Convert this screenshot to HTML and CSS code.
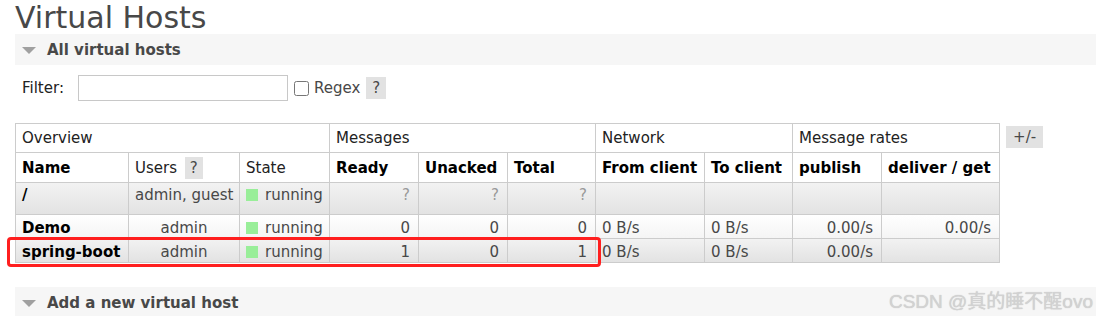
FILE: index.html
```html
<!DOCTYPE html>
<html lang="en">
<head>
  <meta charset="UTF-8">
  <title>Virtual Hosts</title>
  <link rel="stylesheet" href="styles.css">
</head>
<body>
  <div class="page">
    <h1>Virtual Hosts</h1>
    <div class="section-head"><span class="arrow"></span>All virtual hosts</div>

    <div class="filter">
      <label for="filter">Filter:</label>
      <input type="text" id="filter">
      <input type="checkbox" id="regex"> <label for="regex" class="regex">Regex</label>
      <span class="help">?</span>
    </div>

    <div class="list-wrap">
      <table class="list">
        <colgroup>
          <col style="width:113px"><col style="width:111px"><col style="width:90px">
          <col style="width:89px"><col style="width:89px"><col style="width:88px">
          <col style="width:109px"><col style="width:88px">
          <col style="width:89px"><col style="width:118px">
        </colgroup>
        <thead>
          <tr class="group">
            <th colspan="3">Overview</th>
            <th colspan="3">Messages</th>
            <th colspan="2">Network</th>
            <th colspan="2">Message rates</th>
          </tr>
          <tr class="cols">
            <th>Name</th>
            <th class="plain">Users <span class="help">?</span></th>
            <th class="plain">State</th>
            <th>Ready</th>
            <th>Unacked</th>
            <th>Total</th>
            <th>From client</th>
            <th>To client</th>
            <th>publish</th>
            <th>deliver / get</th>
          </tr>
        </thead>
        <tbody>
          <tr class="alt1 tall">
            <td class="name">/</td>
            <td class="c">admin, guest</td>
            <td><span class="status"></span>running</td>
            <td class="r unknown">?</td>
            <td class="r unknown">?</td>
            <td class="r unknown">?</td>
            <td></td><td></td><td></td><td></td>
          </tr>
          <tr class="alt2">
            <td class="name">Demo</td>
            <td class="c">admin</td>
            <td><span class="status"></span>running</td>
            <td class="r">0</td>
            <td class="r">0</td>
            <td class="r">0</td>
            <td>0 B/s</td>
            <td>0 B/s</td>
            <td class="r">0.00/s</td>
            <td class="r">0.00/s</td>
          </tr>
          <tr class="alt1">
            <td class="name">spring-boot</td>
            <td class="c">admin</td>
            <td><span class="status"></span>running</td>
            <td class="r">1</td>
            <td class="r">0</td>
            <td class="r">1</td>
            <td>0 B/s</td>
            <td>0 B/s</td>
            <td class="r">0.00/s</td>
            <td></td>
          </tr>
        </tbody>
      </table>
      <span class="help toggle">+/-</span>
      <div class="mark"></div>
    </div>

    <div class="section-head bottom"><span class="arrow"></span>Add a new virtual host</div>
  </div>
  <div class="watermark">CSDN @真的睡不醒ovo</div>
</body>
</html>
```

FILE: styles.css
```css
body {
  margin: 0;
  font-family: "DejaVu Sans", Verdana, sans-serif;
  font-size: 15px;
  color: #484848;
  background: #fff;
  overflow: hidden;
}
.page {
  padding-left: 15px;
}
h1 {
  margin: 0;
  padding: 2px 0 0 0;
  font-size: 30px;
  font-weight: normal;
  line-height: 32px;
  color: #484848;
}
.section-head {
  display: flex;
  align-items: center;
  height: 31px;
  background: #f6f6f6;
  font-weight: bold;
  color: #484848;
}
.arrow {
  width: 0;
  height: 0;
  margin: 2px 11px 0 7px;
  border-left: 7px solid transparent;
  border-right: 7px solid transparent;
  border-top: 7px solid #a0a0a0;
}
.filter {
  display: flex;
  align-items: center;
  margin-top: 10px;
  padding-left: 7px;
  height: 26px;
}
.filter input[type="text"] {
  width: 210px;
  height: 26px;
  box-sizing: border-box;
  margin: 0 0 0 14px;
  border: 1px solid #c8c8c8;
}
.filter input[type="checkbox"] {
  width: 15px;
  height: 15px;
  margin: 0 5px 0 6px;
}
.filter label {
  color: #222;
}
.filter .regex {
  color: #484848;
}
.help {
  display: inline-block;
  background: #e2e2e2;
  padding: 0 5px;
  line-height: 22px;
  color: #484848;
}
.filter .help {
  margin-left: 6px;
  padding: 0 6px;
}
.list-wrap {
  position: relative;
  display: flex;
  align-items: flex-start;
  margin-top: 22px;
}
table.list {
  border-collapse: collapse;
  table-layout: fixed;
  width: 985px;
}
.list th, .list td {
  border: 1px solid #ccc;
  padding: 0 6px;
  white-space: nowrap;
  overflow: hidden;
  text-align: left;
}
.list th {
  height: 28px;
  color: #000;
}
.list .group th {
  font-weight: normal;
  color: #222;
}
.list .cols th {
  height: 29px;
}
.list .cols th.plain {
  font-weight: normal;
  color: #222;
}
.list .cols .help {
  margin-left: 3px;
  line-height: 22px;
}
.list td {
  height: 21px;
  padding-top: 2px;
}
.list tr.tall td {
  height: 32px;
  box-sizing: border-box;
  vertical-align: top;
  padding-top: 3px;
}
.list tr.alt1 {
  background: linear-gradient(#f2f2f2, #e2e2e2);
}
.list tr.alt2 {
  background: linear-gradient(#ffffff, #f4f4f4);
}
.list td.name {
  font-weight: bold;
  color: #000;
}
.list td.c {
  text-align: center;
}
.list td.r {
  text-align: right;
  padding-right: 8px;
}
.list td.unknown {
  color: #999;
}
.status {
  display: inline-block;
  width: 12px;
  height: 12px;
  margin-right: 7px;
  background: #99ee99;
  vertical-align: -1px;
}
.toggle {
  margin: 3px 0 0 6px;
  padding: 0 7px;
}
.mark {
  position: absolute;
  left: -8px;
  top: 114px;
  width: 588px;
  height: 24px;
  border: 3px solid #ff1f1f;
  border-radius: 4px;
}
.section-head.bottom {
  margin-top: 24px;
}
.watermark {
  position: absolute;
  right: 3px;
  top: 286px;
  font-family: "Liberation Sans", "Noto Sans CJK SC", sans-serif;
  font-size: 19px;
  color: #d2d2d2;
  text-shadow: 0 0 1px #c4c4c4;
}
```
